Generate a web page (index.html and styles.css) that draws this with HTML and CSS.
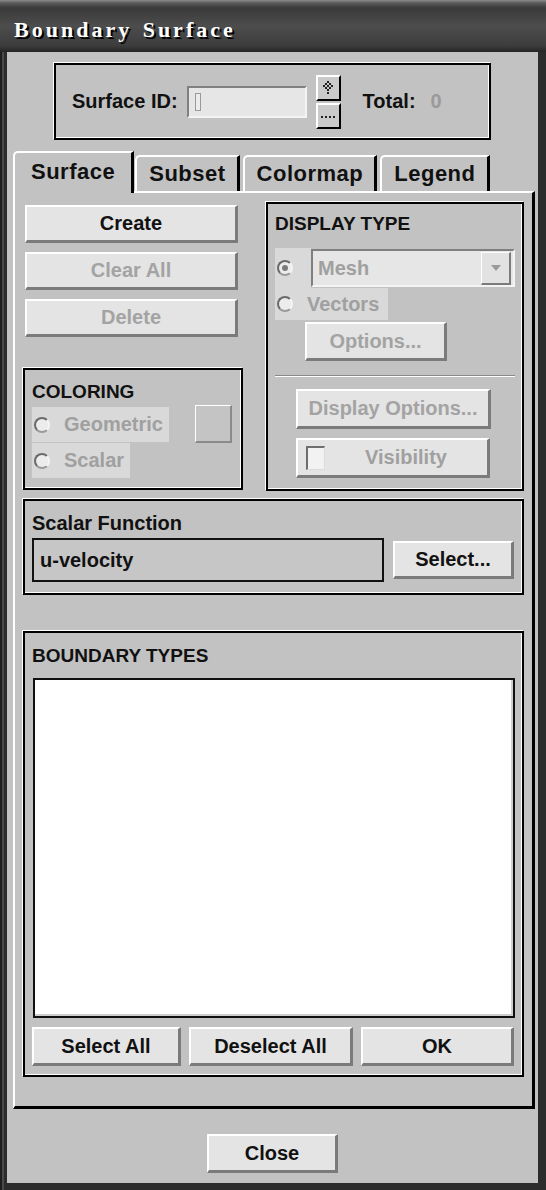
FILE: index.html
```html
<!DOCTYPE html>
<html lang="en">
<head>
  <meta charset="UTF-8">
  <title>Boundary Surface</title>
  <link rel="stylesheet" href="styles.css">
</head>
<body>

  <div class="window">
    <div class="titlebar">Boundary Surface</div>

    <div class="client">

      <!-- Surface ID -->
      <div class="box id-group">
        <span class="id-label">Surface ID:</span>
        <div class="id-field"><span class="caret"></span></div>
        <div class="spinner">
          <button type="button" class="spin">
            <svg width="12" height="14" viewBox="0 0 12 14">
              <g fill="#222">
                <rect x="5" y="0" width="2" height="2"/>
                <rect x="3" y="2" width="2" height="2"/>
                <rect x="7" y="2" width="2" height="2"/>
                <rect x="1" y="4" width="2" height="2"/>
                <rect x="5" y="4" width="2" height="2"/>
                <rect x="9" y="4" width="2" height="2"/>
                <rect x="3" y="6" width="2" height="2"/>
                <rect x="7" y="6" width="2" height="2"/>
                <rect x="5" y="8" width="2" height="2"/>
                <rect x="5" y="11" width="2" height="2"/>
              </g>
            </svg>
          </button>
          <button type="button" class="spin">
            <svg width="14" height="6" viewBox="0 0 14 6">
              <g fill="#222">
                <rect x="0" y="3" width="2" height="2"/>
                <rect x="4" y="3" width="2" height="2"/>
                <rect x="8" y="3" width="2" height="2"/>
                <rect x="12" y="3" width="2" height="2"/>
              </g>
            </svg>
          </button>
        </div>
        <span class="id-label total">Total:</span>
        <span class="total-value">0</span>
      </div>

      <!-- Tabs -->
      <div class="tabs">
        <div class="tab active">Surface</div>
        <div class="tab">Subset</div>
        <div class="tab">Colormap</div>
        <div class="tab">Legend</div>
      </div>

      <div class="panel">
        <div class="columns">

          <div class="left-col">
            <button type="button" class="btn">Create</button>
            <button type="button" class="btn" disabled>Clear All</button>
            <button type="button" class="btn" disabled>Delete</button>

            <div class="box coloring">
              <div class="box-title">COLORING</div>
              <div class="coloring-body">
                <div class="radio-list">
                  <div class="radio-item"><span class="radio"></span>Geometric</div>
                  <div class="radio-item"><span class="radio"></span>Scalar</div>
                </div>
                <div class="swatch"></div>
              </div>
            </div>
          </div>

          <div class="box display-box">
            <div class="box-title">DISPLAY TYPE</div>
            <div class="mesh-row">
              <span class="radio-cell"><span class="radio checked"></span></span>
              <div class="combo">
                <span class="combo-text">Mesh</span>
                <span class="combo-btn">
                  <svg width="10" height="6" viewBox="0 0 10 6"><path d="M0 0 H10 L5 6 Z" fill="#9a9a9a"/></svg>
                </span>
              </div>
            </div>
            <div class="radio-item vectors"><span class="radio"></span>Vectors</div>
            <button type="button" class="btn options-btn" disabled>Options...</button>
            <div class="separator"></div>
            <button type="button" class="btn wide-btn" disabled>Display Options...</button>
            <div class="btn wide-btn visibility">
              <span class="check"></span>
              <span class="visibility-text">Visibility</span>
            </div>
          </div>

        </div>

        <!-- Scalar Function -->
        <div class="box scalar-box">
          <div class="box-title">Scalar Function</div>
          <div class="scalar-row">
            <div class="scalar-field">u-velocity</div>
            <button type="button" class="btn select-btn">Select...</button>
          </div>
        </div>

        <!-- Boundary types -->
        <div class="box boundary-box">
          <div class="box-title">BOUNDARY TYPES</div>
          <div class="list"></div>
          <div class="list-buttons">
            <button type="button" class="btn select-all">Select All</button>
            <button type="button" class="btn deselect-all">Deselect All</button>
            <button type="button" class="btn ok-btn">OK</button>
          </div>
        </div>
      </div>

      <button type="button" class="btn close-btn">Close</button>
    </div>
  </div>

</body>
</html>
```

FILE: styles.css
```css
body {
  margin: 0;
  background: #2b2b2b;
  font-family: "Liberation Sans", Arial, sans-serif;
  font-weight: bold;
  color: #111;
}

/* Marco de la ventana */
.window {
  width: 546px;
  height: 1190px;
  display: flex;
  flex-direction: column;
  background: linear-gradient(to right, #1e1e1e 0, #1e1e1e 2px, #4a4a4a 2px, #4a4a4a 4px, #2c2c2c 4px);
}

.titlebar {
  flex: none;
  height: 52px;
  box-sizing: border-box;
  padding: 8px 0 0 14px;
  display: flex;
  align-items: center;
  background: linear-gradient(to bottom, #8c8c8c 0, #5a5a5a 3px, #3a3a3a 8px, #4d4d4d 26px, #3c3c3c 46px, #242424 52px);
  font-family: "Liberation Serif", "DejaVu Serif", serif;
  font-size: 22px;
  font-weight: bold;
  letter-spacing: 3px;
  word-spacing: 2px;
  color: #fff;
  text-shadow: 2px 2px 0 #000;
}

.client {
  flex: 1;
  margin: 0 8px 7px 7px;
  padding: 11px 3px 0 6px;
  background: #c2c2c2;
  display: flex;
  flex-direction: column;
}

/* Caja con borde grabado */
.box {
  box-sizing: border-box;
  border: 2px solid #000;
  box-shadow: -1px -1px 0 #fff, inset -1px -1px 0 #fff;
}

.box-title {
  font-size: 19px;
  line-height: 22px;
  height: 22px;
}

button {
  font-family: inherit;
}

.btn {
  box-sizing: border-box;
  height: 38px;
  padding: 0;
  display: flex;
  align-items: center;
  justify-content: center;
  background: #e4e4e4;
  border-style: solid;
  border-width: 2px 3px 3px 2px;
  border-color: #fff #7b7b7b #7b7b7b #fff;
  font-size: 20px;
  font-weight: bold;
  color: #111;
  cursor: pointer;
}

.btn:disabled {
  color: #a3a3a3;
  cursor: default;
}

/* Surface ID */
.id-group {
  flex: none;
  margin-left: 41px;
  width: 437px;
  height: 77px;
  padding-left: 16px;
  display: flex;
  align-items: center;
}

.id-label {
  font-size: 20px;
}

.id-field {
  box-sizing: border-box;
  width: 120px;
  height: 32px;
  margin-left: 9px;
  padding: 5px 0 0 6px;
  background: #e6e6e6;
  border-style: solid;
  border-width: 2px;
  border-color: #808080 #f4f4f4 #f4f4f4 #808080;
}

.caret {
  display: block;
  box-sizing: border-box;
  width: 6px;
  height: 18px;
  border: 1px solid #9a9a9a;
  background: #ececec;
}

.spinner {
  margin-left: 9px;
  display: flex;
  flex-direction: column;
  gap: 2px;
}

.spin {
  box-sizing: border-box;
  width: 25px;
  height: 26px;
  padding: 0;
  display: flex;
  align-items: center;
  justify-content: center;
  background: #cacaca;
  border: 2px solid;
  border-color: #fff #000 #000 #fff;
}

.total {
  margin-left: 22px;
}

.total-value {
  margin-left: 15px;
  font-size: 20px;
  color: #9a9a9a;
}

/* Pestañas */
.tabs {
  flex: none;
  margin-top: 11px;
  height: 40px;
  display: flex;
  align-items: flex-end;
}

.tab {
  box-sizing: border-box;
  height: 36px;
  padding: 0 11px 0 12px;
  margin-right: 3px;
  display: flex;
  align-items: center;
  border-top: 2px solid #fff;
  border-left: 2px solid #fff;
  border-right: 3px solid #000;
  border-top-left-radius: 5px;
  font-size: 22px;
  letter-spacing: 0.5px;
}

.tab.active {
  height: 42px;
  margin-bottom: -2px;
  margin-right: 1px;
  padding: 0 16px 2px 16px;
  position: relative;
  z-index: 1;
  background: #c2c2c2;
}

.panel {
  flex: none;
  border-top: 2px solid #fff;
  border-left: 2px solid #fff;
  border-right: 3px solid #000;
  border-bottom: 3px solid #000;
  padding: 9px 8px 29px 8px;
}

.columns {
  display: grid;
  grid-template-columns: 220px 258px;
  column-gap: 23px;
  height: 289px;
}

.left-col {
  display: flex;
  flex-direction: column;
}

.left-col > .btn {
  margin: 0 5px 9px 2px;
}

.left-col > .btn:first-child {
  margin-top: 3px;
}

/* COLORING */
.coloring {
  margin-top: 22px;
  height: 122px;
  padding: 11px 0 0 7px;
}

.coloring-body {
  margin-top: 4px;
  display: flex;
  align-items: flex-start;
}

.radio-list {
  display: flex;
  flex-direction: column;
  align-items: flex-start;
  gap: 1px;
}

.radio-item {
  box-sizing: border-box;
  height: 35px;
  padding: 0 6px 0 2px;
  display: flex;
  align-items: center;
  gap: 14px;
  background: #d9d9d9;
  font-size: 20px;
  color: #a0a0a0;
}

.radio {
  box-sizing: border-box;
  width: 16px;
  height: 16px;
  border-radius: 50%;
  border: 2px solid;
  border-color: #6a6a6a #f4f4f4 #9a9a9a #6a6a6a;
  background: #ececec;
  position: relative;
  flex: none;
}

.radio.checked::after {
  content: "";
  position: absolute;
  left: 3px;
  top: 3px;
  width: 6px;
  height: 6px;
  border-radius: 50%;
  background: #7a7a7a;
}

.swatch {
  box-sizing: border-box;
  width: 37px;
  height: 38px;
  margin: -2px 9px 0 auto;
  background: #c4c4c4;
  border-style: solid;
  border-width: 1px 2px 2px 1px;
  border-color: #fff #8a8a8a #8a8a8a #fff;
}

/* DISPLAY TYPE */
.display-box {
  height: 289px;
  padding: 9px 7px 0 7px;
  display: flex;
  flex-direction: column;
}

.display-box .box-title {
  margin-bottom: 13px;
}

.mesh-row {
  height: 40px;
  display: flex;
}

.radio-cell {
  width: 36px;
  padding-left: 2px;
  box-sizing: border-box;
  display: flex;
  align-items: center;
  background: #d9d9d9;
}

.combo {
  flex: 1;
  box-sizing: border-box;
  margin: 1px 0;
  display: flex;
  align-items: center;
  background: #e6e6e6;
  border-style: solid;
  border-width: 2px;
  border-color: #7f7f7f #f4f4f4 #f4f4f4 #7f7f7f;
}

.combo-text {
  flex: 1;
  padding-left: 5px;
  font-size: 20px;
  color: #a0a0a0;
}

.combo-btn {
  box-sizing: border-box;
  width: 30px;
  height: 33px;
  margin-right: 2px;
  display: flex;
  align-items: center;
  justify-content: center;
  background: #e2e2e2;
  border-style: solid;
  border-width: 1px 2px 2px 1px;
  border-color: #fff #7b7b7b #7b7b7b #fff;
}

.vectors {
  align-self: flex-start;
  height: 32px;
  width: 113px;
}

.options-btn {
  margin: 2px 0 0 30px;
  width: 142px;
  height: 39px;
}

.separator {
  margin-top: 14px;
  height: 1px;
  background: #8a8a8a;
  border-bottom: 1px solid #fff;
}

.wide-btn {
  margin: 12px 0 0 21px;
  width: 195px;
  height: 40px;
}

.visibility {
  margin-top: 9px;
  width: 194px;
  justify-content: flex-start;
  padding-left: 8px;
  cursor: default;
}

.check {
  box-sizing: border-box;
  width: 19px;
  height: 24px;
  background: #f2f2f2;
  border-style: solid;
  border-width: 2px 1px 1px 2px;
  border-color: #6e6e6e #dcdcdc #dcdcdc #6e6e6e;
}

.visibility-text {
  flex: 1;
  text-align: center;
  color: #a0a0a0;
}

/* Scalar Function */
.scalar-box {
  margin-top: 8px;
  height: 96px;
  padding: 11px 8px 0 7px;
}

.scalar-box .box-title {
  font-size: 20px;
}

.scalar-row {
  margin-top: 4px;
  display: flex;
  align-items: center;
}

.scalar-field {
  box-sizing: border-box;
  width: 352px;
  height: 44px;
  padding-left: 6px;
  display: flex;
  align-items: center;
  background: #c6c6c6;
  border: 2px solid #111;
  font-size: 20px;
}

.select-btn {
  margin-left: 9px;
  width: 121px;
}

/* Boundary types */
.boundary-box {
  margin-top: 36px;
  height: 446px;
  padding: 12px 8px 0 7px;
}

.list {
  margin: 11px 0 0 1px;
  box-sizing: border-box;
  width: 482px;
  height: 340px;
  background: #fff;
  border: 2px solid #111;
  box-shadow: inset -2px -2px 0 #cfcfcf;
}

.list-buttons {
  margin-top: 9px;
  display: flex;
  gap: 8px;
}

.list-buttons .btn {
  height: 39px;
}

.select-all {
  width: 149px;
}

.deselect-all {
  width: 164px;
}

.ok-btn {
  width: 153px;
}

.close-btn {
  flex: none;
  margin: 25px 0 0 194px;
  width: 131px;
  height: 39px;
}
```
